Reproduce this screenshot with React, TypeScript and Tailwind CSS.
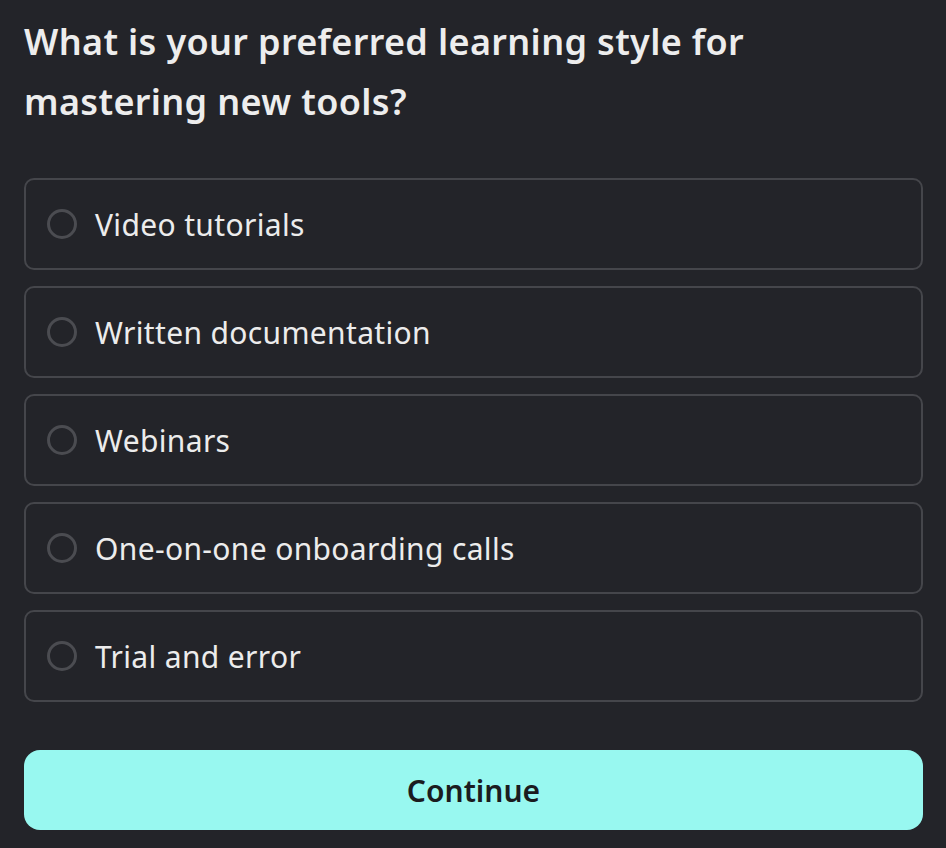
import { useState } from 'react';

const options = [
  'Video tutorials',
  'Written documentation',
  'Webinars',
  'One-on-one onboarding calls',
  'Trial and error',
];

export default function App() {
  const [selected, setSelected] = useState<number | null>(null);

  return (
    <div
      className="min-h-[848px] w-full bg-[#232429] pl-6 pr-[23px] pt-3 text-[#ececec]"
      style={{ fontFamily: '"Noto Sans", "Open Sans", sans-serif' }}
    >
      <h1 className="text-[36px] font-semibold leading-[60px] tracking-[0.35px] text-[#ededed]">
        What is your preferred learning style for mastering new tools?
      </h1>

      <div className="mt-[46px] flex flex-col gap-4">
        {options.map((label, i) => (
          <button
            key={label}
            onClick={() => setSelected(i)}
            className="flex h-[92px] w-full items-center gap-[18px] rounded-[10px] border-2 border-[#45464b] px-[21px] text-left"
          >
            <span className="flex h-[30px] w-[30px] shrink-0 items-center justify-center rounded-full border-[3px] border-[#4b4c51]">
              {selected === i && <span className="h-3 w-3 rounded-full bg-[#98f7ef]" />}
            </span>
            <span className="pt-[2px] text-[30px] leading-none tracking-[0.35px] text-[#ececec]">{label}</span>
          </button>
        ))}
      </div>

      <button className="mt-[48px] flex h-[80px] w-full items-center justify-center rounded-[16px] bg-[#98f8f0] text-[30px] font-semibold text-[#1b1c1f]">
        Continue
      </button>
    </div>
  );
}
